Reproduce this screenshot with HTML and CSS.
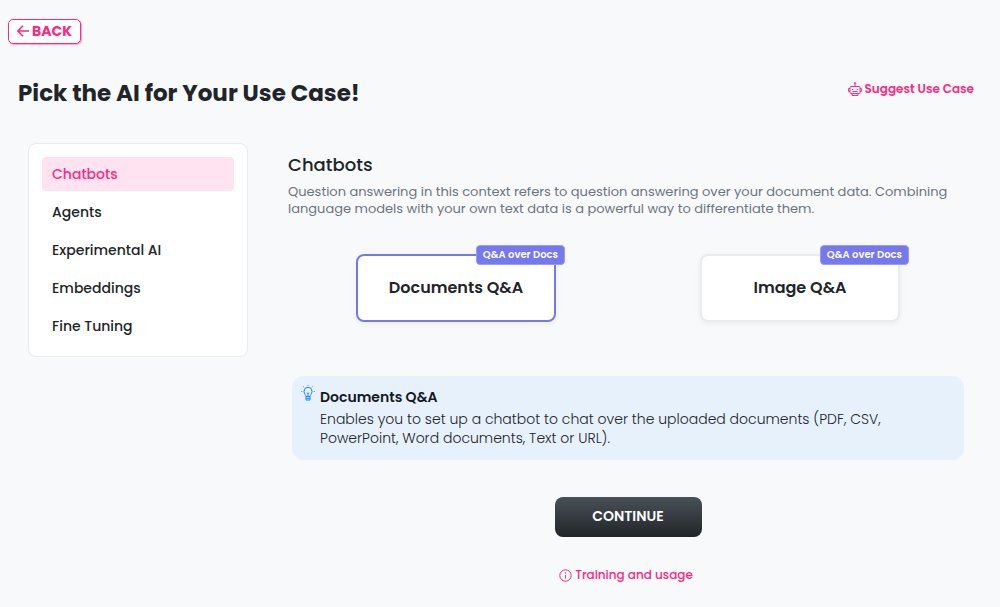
FILE: index.html
```html
<!DOCTYPE html>
<html lang="en">
<head>
<meta charset="utf-8">
<meta name="viewport" content="width=device-width, initial-scale=1">
<title>Pick the AI for Your Use Case!</title>
<link rel="stylesheet" href="styles.css">
</head>
<body>
<div class="page">
  <button class="back" type="button">
    <svg class="back-icon" viewBox="0 0 12 12" aria-hidden="true"><path d="M12 6H1M6 .8L.8 6 6 11.200"/></svg>
    BACK
  </button>
  <header class="header">
    <h1 class="title">Pick the AI for Your Use Case!</h1>
    <a class="link suggest" href="#">
      <svg class="robot-icon" viewBox="0 0 14 14" aria-hidden="true">
        <rect x="2" y="4.500" width="10" height="7" rx="1"/>
        <path d="M7 4.500V2M2 6.500H.6v3H2M12 6.500h1.400v3H12M4 11.500v2h6v-2M4.500 9.500h5"/>
        <circle cx="7" cy="1.200" r=".8"/>
        <path d="M4 7.500h1.200M8.800 7.500H10"/>
      </svg>
      Suggest Use Case
    </a>
  </header>
  <div class="columns">
    <nav class="menu">
      <a class="menu-item active" href="#" aria-current="page">Chatbots</a>
      <a class="menu-item" href="#">Agents</a>
      <a class="menu-item" href="#">Experimental AI</a>
      <a class="menu-item" href="#">Embeddings</a>
      <a class="menu-item" href="#">Fine Tuning</a>
    </nav>
    <main class="main">
      <section class="intro">
        <h2 class="subtitle">Chatbots</h2>
        <p class="description">Question answering in this context refers to question answering over your document data. Combining language models with your own text data is a powerful way to differentiate them.</p>
      </section>
      <div class="cards">
        <button class="card selected" type="button" aria-pressed="true">Documents Q&amp;A<span class="badge">Q&amp;A over Docs</span></button>
        <button class="card" type="button" aria-pressed="false">Image Q&amp;A<span class="badge">Q&amp;A over Docs</span></button>
      </div>
      <aside class="info">
        <svg class="bulb-icon" viewBox="0 0 14 16" aria-hidden="true">
          <path d="M5 11.500C5 9.800 3 9.200 3 6.300a4 4 0 0 1 8 0C11 9.200 9 9.800 9 11.500zM5 11.500v3.500h4v-3.500M5 13.300h4M7 11.500V8M6 7.500l1 1 1-1"/>
          <path d="M7 .2v.9M2.300 1.500l.7.7M11.700 1.500l-.7.7M.4 6.500h.9M12.700 6.500h.9"/>
        </svg>
        <div class="info-body">
          <h3 class="info-title">Documents Q&amp;A</h3>
          <p class="info-text">Enables you to set up a chatbot to chat over the uploaded documents (PDF, CSV, PowerPoint, Word documents, Text or URL).</p>
        </div>
      </aside>
      <button class="continue" type="button">CONTINUE</button>
      <a class="link training" href="#">
        <svg class="info-icon" viewBox="0 0 13 13" aria-hidden="true"><circle cx="6.500" cy="6.500" r="5.700"/><path d="M6.500 5.800v3.700M6.500 3.400v1.200"/></svg>
        Training and usage
      </a>
    </main>
  </div>
</div>
</body>
</html>
```
FILE: styles.css
```css
* {
  box-sizing: border-box;
}

body {
  margin: 0;
  background: #f8f9fb;
  color: #212529;
  font-family: Poppins, Inter, "Open Sans", sans-serif;
}

h1, h2, h3, p {
  margin: 0;
}

button {
  font-family: inherit;
  cursor: pointer;
}

a {
  text-decoration: none;
}

svg {
  flex: none;
  fill: none;
  stroke: currentColor;
}

.page {
  padding: 19px 8px 16px;
}

.back {
  display: flex;
  align-items: center;
  gap: 3px;
  height: 25px;
  padding: 0 8px 2px;
  border: 1px solid #fa2a80;
  border-radius: 5px;
  background: #fff;
  box-shadow: 1px 1px 1px #fa2a8066;
  color: #fa2a80;
  font-size: 14px;
  font-weight: 700;
  line-height: 20px;
}

.back-icon {
  width: 12px;
  height: 12px;
  stroke-width: 1.6;
}

.header {
  display: flex;
  justify-content: space-between;
  align-items: flex-start;
  padding: 31px 18px 0 10px;
}

.title {
  font-size: 23px;
  font-weight: 700;
  line-height: 36px;
}

.link {
  display: flex;
  align-items: center;
  gap: 3px;
  color: #fa2a80;
  font-size: 12px;
  line-height: 20px;
}

.suggest {
  padding-top: 4px;
  font-weight: 600;
}

.robot-icon {
  width: 14px;
  height: 14px;
}

.columns {
  display: flex;
  align-items: flex-start;
  gap: 36px;
  padding: 32px 20px 0;
}

.menu {
  display: flex;
  flex: none;
  flex-direction: column;
  gap: 4px;
  width: 220px;
  padding: 13px;
  border: 1px solid #e9ecef;
  border-radius: 8px;
  background: #fff;
}

.menu-item {
  padding: 7px 10px;
  border-radius: 4px;
  color: #212529;
  font-size: 14px;
  font-weight: 500;
  line-height: 20px;
}

.active {
  background: #ffe3f0;
  color: #fa2a80;
}

.main {
  display: flex;
  flex: 1;
  flex-direction: column;
  min-width: 0;
}

.intro {
  padding: 8px 4px 0;
}

.subtitle {
  font-size: 18px;
  font-weight: 500;
  line-height: 28px;
}

.description {
  padding-top: 4px;
  color: #6c757d;
  font-size: 13px;
  line-height: 17px;
}

.cards {
  display: grid;
  grid-template-columns: 1fr 1fr;
  justify-items: center;
  padding-top: 37px;
}

.card {
  position: relative;
  width: 200px;
  height: 68px;
  padding: 0 6px 2px;
  border: 2px solid #e9ecef;
  border-radius: 8px;
  background: #fff;
  box-shadow: 0 2px 6px #0000000d;
  color: #212529;
  font-size: 16px;
  font-weight: 600;
}

.selected {
  border-color: #7678ed;
}

.badge {
  position: absolute;
  top: -11px;
  right: -11px;
  padding: 2px 6px;
  border: 1px solid #9a9bf2;
  border-radius: 4px;
  background: #7678ed;
  color: #fff;
  font-size: 10px;
  font-weight: 600;
  line-height: 14px;
  white-space: nowrap;
}

.info {
  display: flex;
  gap: 5px;
  margin: 54px 8px 0;
  padding: 9px 28px 12px 9px;
  border-radius: 12px;
  background: #e7f1fc;
  color: #212529;
}

.bulb-icon {
  width: 14px;
  height: 16px;
  color: #1e88f5;
}

.info-title {
  padding-top: 2px;
  color: #14181f;
  font-size: 14px;
  font-weight: 600;
  line-height: 20px;
}

.info-text {
  padding-top: 3px;
  font-size: 14px;
  font-weight: 300;
  line-height: 19px;
}

.continue {
  align-self: center;
  width: 147px;
  height: 40px;
  margin-top: 37px;
  padding: 0 6px 2px;
  border: 0;
  border-radius: 8px;
  background: linear-gradient(#495057, #212529);
  color: #fff;
  font-size: 14px;
  font-weight: 600;
}

.training {
  align-self: center;
  margin-top: 28px;
  padding-right: 4px;
  font-weight: 500;
}

.info-icon {
  width: 13px;
  height: 13px;
}
```
